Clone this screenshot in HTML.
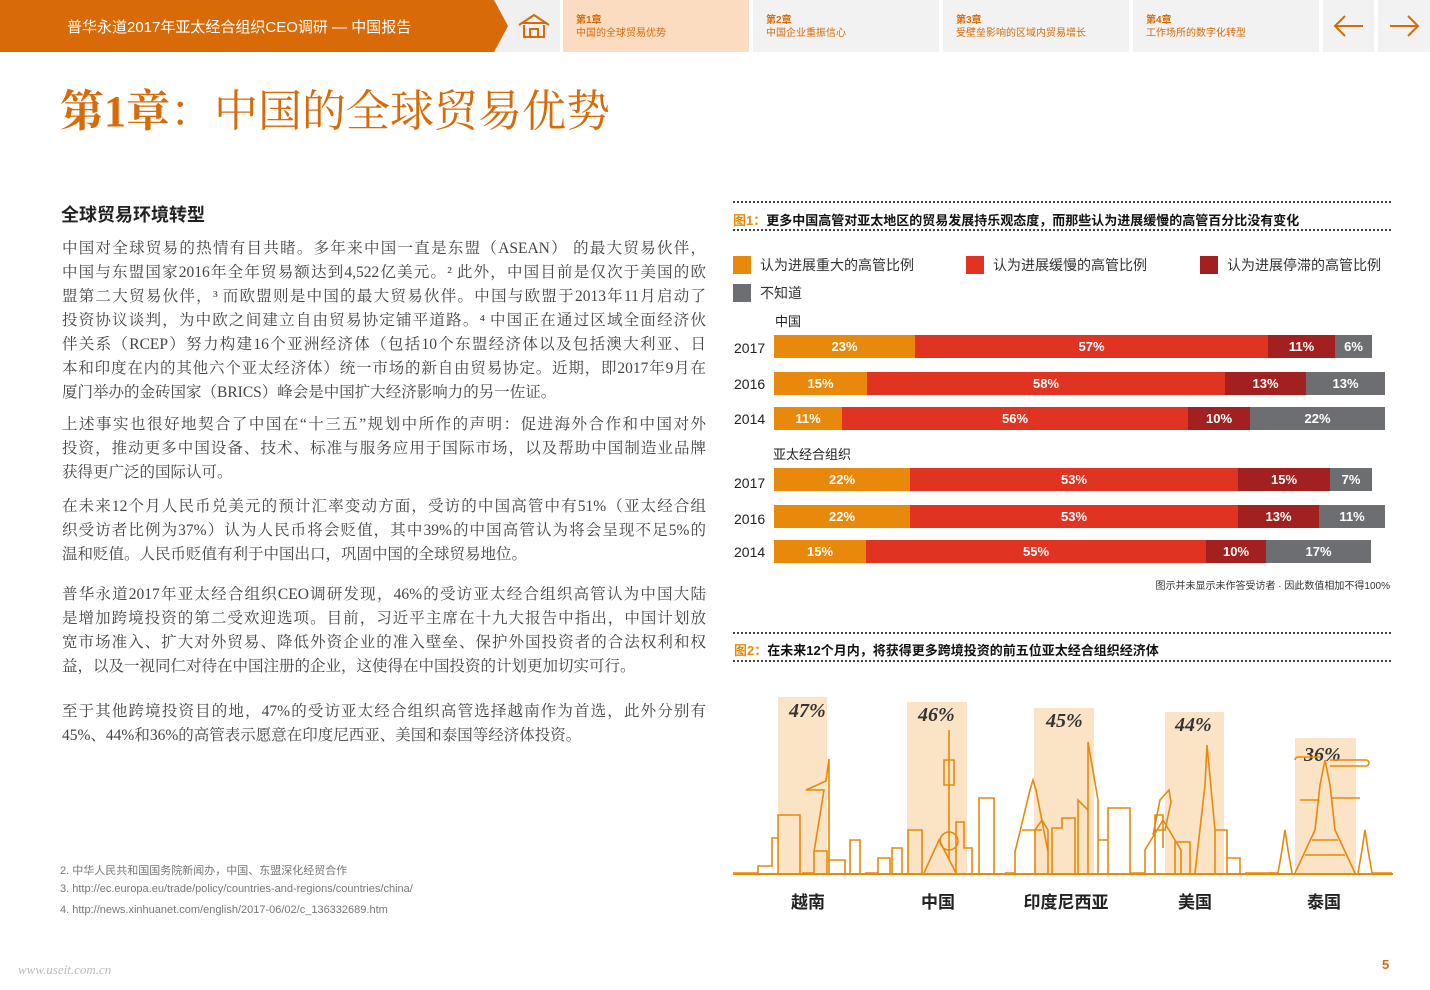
<!DOCTYPE html>
<html><head><meta charset="utf-8">
<style>
*{margin:0;padding:0;box-sizing:border-box}
body{width:1430px;height:990px;background:#fff;position:relative;overflow:hidden;font-family:"Liberation Sans","Noto Sans CJK SC",sans-serif}
.a{position:absolute}
.nav{position:absolute;top:0;height:52px;background:#f2f2f2;color:#d86a07;font-size:10px;line-height:13px;padding:14px 0 0 13px}
.nav b{display:block}
.body{position:absolute;left:62px;width:644px;font-family:"Liberation Serif","Noto Serif CJK SC",serif;font-size:15.5px;color:#444;line-height:24px}
.body div{text-align:justify;text-align-last:justify;white-space:nowrap;height:24px}
.body div.l{text-align-last:left}
.bar{position:absolute;height:23px;left:774px;display:flex}
.bar span{display:block;height:100%;color:#fff;font-weight:bold;font-size:13px;text-align:center;line-height:23px}
.o{background:#e8890c}.r{background:#e03321}.d{background:#a32020}.g{background:#6d6e71}
.yr{position:absolute;left:734px;font-size:14px;color:#222}
.dot{position:absolute;left:733px;width:658px;border-top:2px dotted #444}
.leg{position:absolute;font-size:14px;color:#333}
.leg i{position:absolute;left:-27px;top:1px;width:18px;height:18px}
.pk{position:absolute;background:#fbe3c6}
.pct{position:absolute;font-family:"Liberation Serif",serif;font-style:italic;font-weight:bold;font-size:20px;color:#333}
.cl{position:absolute;top:888px;font-size:17px;color:#222;font-weight:bold;text-align:center;width:100px}
.fn{position:absolute;left:60px;font-size:11px;color:#777}
</style></head><body>
<div class="a" style="left:0;top:0;width:560px;height:52px;background:#f0f0f0"></div>
<svg class="a" style="left:0;top:0" width="520" height="52"><polygon points="0,0 494,0 508,26 494,52 0,52" fill="#d86a07"/></svg>
<div class="a" style="left:67px;top:16px;color:#fff;font-size:15px">普华永道2017年亚太经合组织CEO调研 — 中国报告</div>
<svg class="a" style="left:517px;top:12px" width="34" height="28" viewBox="0 0 34 28" fill="none" stroke="#d86a07" stroke-width="2"><path d="M2 13 L17 3 L32 13 M4 11 H30 M7 13 V25 H27 V13 M13 25 V17 H21 V25"/></svg>
<div class="nav" style="left:563px;width:186px;background:#fbdcc0"><b>第1章</b>中国的全球贸易优势</div>
<div class="nav" style="left:753px;width:186px"><b>第2章</b>中国企业重振信心</div>
<div class="nav" style="left:943px;width:186px"><b>第3章</b>受壁垒影响的区域内贸易增长</div>
<div class="nav" style="left:1133px;width:186px"><b>第4章</b>工作场所的数字化转型</div>
<div class="nav" style="left:1323px;width:51px;padding:0"><svg width="51" height="52"><path d="M12 26 H40 M22 16 L12 26 L22 36" stroke="#d86a07" stroke-width="2" fill="none"/></svg></div>
<div class="nav" style="left:1378px;width:52px;padding:0"><svg width="52" height="52"><path d="M12 26 H40 M30 16 L40 26 L30 36" stroke="#d86a07" stroke-width="2" fill="none"/></svg></div>

<div class="a" style="left:60px;top:84px;font-size:44px;color:#d86a07;font-family:'Liberation Serif','Noto Serif CJK SC',serif;line-height:56px;white-space:nowrap"><b>第1章</b>：中国的全球贸易优势</div>

<div class="a" style="left:61px;top:201px;font-size:18px;font-weight:bold;color:#222">全球贸易环境转型</div>
<div class="body" style="top:237px">
<div>中国对全球贸易的热情有目共睹。多年来中国一直是东盟（ASEAN） 的最大贸易伙伴，</div>
<div>中国与东盟国家2016年全年贸易额达到4,522亿美元。² 此外，中国目前是仅次于美国的欧</div>
<div>盟第二大贸易伙伴，³ 而欧盟则是中国的最大贸易伙伴。中国与欧盟于2013年11月启动了</div>
<div>投资协议谈判，为中欧之间建立自由贸易协定铺平道路。⁴ 中国正在通过区域全面经济伙</div>
<div>伴关系（RCEP）努力构建16个亚洲经济体（包括10个东盟经济体以及包括澳大利亚、日</div>
<div>本和印度在内的其他六个亚太经济体）统一市场的新自由贸易协定。近期，即2017年9月在</div>
<div class="l">厦门举办的金砖国家（BRICS）峰会是中国扩大经济影响力的另一佐证。</div>
</div>
<div class="body" style="top:413px">
<div>上述事实也很好地契合了中国在“十三五”规划中所作的声明：促进海外合作和中国对外</div>
<div>投资，推动更多中国设备、技术、标准与服务应用于国际市场，以及帮助中国制造业品牌</div>
<div class="l">获得更广泛的国际认可。</div>
</div>
<div class="body" style="top:495px">
<div>在未来12个月人民币兑美元的预计汇率变动方面，受访的中国高管中有51%（亚太经合组</div>
<div>织受访者比例为37%）认为人民币将会贬值，其中39%的中国高管认为将会呈现不足5%的</div>
<div class="l">温和贬值。人民币贬值有利于中国出口，巩固中国的全球贸易地位。</div>
</div>
<div class="body" style="top:583px">
<div>普华永道2017年亚太经合组织CEO调研发现，46%的受访亚太经合组织高管认为中国大陆</div>
<div>是增加跨境投资的第二受欢迎选项。目前，习近平主席在十九大报告中指出，中国计划放</div>
<div>宽市场准入、扩大对外贸易、降低外资企业的准入壁垒、保护外国投资者的合法权利和权</div>
<div class="l">益，以及一视同仁对待在中国注册的企业，这使得在中国投资的计划更加切实可行。</div>
</div>
<div class="body" style="top:700px">
<div>至于其他跨境投资目的地，47%的受访亚太经合组织高管选择越南作为首选，此外分别有</div>
<div class="l">45%、44%和36%的高管表示愿意在印度尼西亚、美国和泰国等经济体投资。</div>
</div>

<div class="fn" style="top:862px">2. 中华人民共和国国务院新闻办，中国、东盟深化经贸合作</div>
<div class="fn" style="top:883px">3. http://ec.europa.eu/trade/policy/countries-and-regions/countries/china/</div>
<div class="fn" style="top:904px">4. http://news.xinhuanet.com/english/2017-06/02/c_136332689.htm</div>
<div class="a" style="left:18px;top:962px;font-size:13px;color:#bbb;font-family:'Liberation Serif',serif;font-style:italic">www.useit.com.cn</div>
<div class="a" style="left:1382px;top:957px;font-size:13px;color:#d86a07;font-weight:bold">5</div>

<div class="dot" style="top:201px"></div>
<div class="a" style="left:733px;top:210px;font-size:13px;font-weight:bold;color:#111"><span style="color:#e8890c">图1：</span>更多中国高管对亚太地区的贸易发展持乐观态度，而那些认为进展缓慢的高管百分比没有变化</div>
<div class="dot" style="top:229px"></div>
<div class="leg" style="left:760px;top:255px"><i class="o"></i>认为进展重大的高管比例</div>
<div class="leg" style="left:993px;top:255px"><i class="r"></i>认为进展缓慢的高管比例</div>
<div class="leg" style="left:1227px;top:255px"><i class="d"></i>认为进展停滞的高管比例</div>
<div class="leg" style="left:760px;top:283px"><i class="g"></i>不知道</div>
<div class="a" style="left:775px;top:311px;font-size:13px;color:#222">中国</div>
<div class="a" style="left:773px;top:444px;font-size:13px;color:#222">亚太经合组织</div>

<div class="yr" style="top:340px">2017</div>
<div class="bar" style="top:335px"><span class="o" style="width:141px">23%</span><span class="r" style="width:353px">57%</span><span class="d" style="width:67px">11%</span><span class="g" style="width:37px">6%</span></div>
<div class="yr" style="top:376px">2016</div>
<div class="bar" style="top:372px"><span class="o" style="width:93px">15%</span><span class="r" style="width:358px">58%</span><span class="d" style="width:81px">13%</span><span class="g" style="width:79px">13%</span></div>
<div class="yr" style="top:411px">2014</div>
<div class="bar" style="top:407px"><span class="o" style="width:68px">11%</span><span class="r" style="width:346px">56%</span><span class="d" style="width:62px">10%</span><span class="g" style="width:135px">22%</span></div>
<div class="yr" style="top:475px">2017</div>
<div class="bar" style="top:468px"><span class="o" style="width:136px">22%</span><span class="r" style="width:328px">53%</span><span class="d" style="width:92px">15%</span><span class="g" style="width:42px">7%</span></div>
<div class="yr" style="top:511px">2016</div>
<div class="bar" style="top:505px"><span class="o" style="width:136px">22%</span><span class="r" style="width:328px">53%</span><span class="d" style="width:81px">13%</span><span class="g" style="width:66px">11%</span></div>
<div class="yr" style="top:544px">2014</div>
<div class="bar" style="top:540px"><span class="o" style="width:92px">15%</span><span class="r" style="width:340px">55%</span><span class="d" style="width:60px">10%</span><span class="g" style="width:105px">17%</span></div>
<div class="a" style="left:1100px;top:577px;width:290px;text-align:right;font-size:10px;color:#333">图示并未显示未作答受访者 · 因此数值相加不得100%</div>

<div class="dot" style="top:632px"></div>
<div class="a" style="left:734px;top:640px;font-size:13px;font-weight:bold;color:#111"><span style="color:#e8890c">图2：</span>在未来12个月内，将获得更多跨境投资的前五位亚太经合组织经济体</div>
<div class="dot" style="top:660px"></div>

<div class="pk" style="left:778px;top:697px;width:49px;height:176px"></div>
<div class="pk" style="left:907px;top:702px;width:60px;height:171px"></div>
<div class="pk" style="left:1034px;top:708px;width:60px;height:165px"></div>
<div class="pk" style="left:1165px;top:712px;width:59px;height:161px"></div>
<div class="pk" style="left:1295px;top:738px;width:61px;height:135px"></div>
<div class="pct" style="left:789px;top:700px">47%</div>
<div class="pct" style="left:918px;top:704px">46%</div>
<div class="pct" style="left:1046px;top:710px">45%</div>
<div class="pct" style="left:1175px;top:714px">44%</div>
<div class="pct" style="left:1304px;top:744px">36%</div>
<svg class="a" style="left:730px;top:680px" width="670" height="200" fill="none" stroke="#e8890c" stroke-width="1.6">
<path d="M3 193 H28 V186 H42 V158 H48 V193 M48 193 V135 H70 V193 M72 193 H84 V171 H97 V193 M84 172 L94 110 H76 L96 101 L99 79 V193 M98 180 H115 V193 M120 193 V160 H130 V193 M135 193 H148"/>
<g transform="translate(14,0)"><path d="M134 193 V178 H146 V193 M148 193 V168 H158 V193 M164 193 V150 H178 V193 M180 193 L195 160 L212 193 M205 180 V50 M200 105 H210 V80 H200Z M205 170 A8 8 0 1 0 205 152 A8 8 0 1 0 205 170 M212 193 V142 H220 V168 H228 V193 M235 193 V118 H250 V193"/></g>
<g transform="translate(-110,0)"><path d="M385 193 H395 V172 L410 110 L413 100 L416 110 L428 172 V193 M402 150 H422 M415 193 V150 L422 140 L428 150 V193 M432 193 V148 H442 V138 H455 V193 M458 193 V120 L468 130 V193 M468 193 V62 L478 120 V193 M478 193 V160 H488 V193 M488 193 V128 H510 V193"/></g>
<g transform="translate(-115,0)"><path d="M515 193 H530 V170 L548 140 L566 170 V193 M540 193 V135 H548 V168 M560 193 V162 H575 V193 M538 155 L545 120 L554 110 L556 122 L550 150 H540 M580 193 L590 105 L592 65 L600 150 V193 M600 193 V150 H612 V193 M612 193 V178 H625 V193 M630 193 H660"/></g>
<path d="M540 193 H548 L552 170 L555 150 L558 170 L562 193 M565 193 L585 150 L590 105 L595 80 L600 105 L605 150 L625 193 M575 175 H615 M582 160 H608 M628 193 L632 170 L635 150 L638 170 L642 193 M570 120 H588 M602 118 H630 M565 80 A3 3 0 0 1 568 77 H590 M600 80 H636 A3 3 0 0 1 636 86 H600 M642 193 H662"/>
</svg>
<div class="a" style="left:733px;top:873px;width:660px;height:2px;background:#e8890c"></div>
<div class="cl" style="left:758px">越南</div>
<div class="cl" style="left:888px">中国</div>
<div class="cl" style="left:1016px">印度尼西亚</div>
<div class="cl" style="left:1145px">美国</div>
<div class="cl" style="left:1274px">泰国</div>
</body></html>
